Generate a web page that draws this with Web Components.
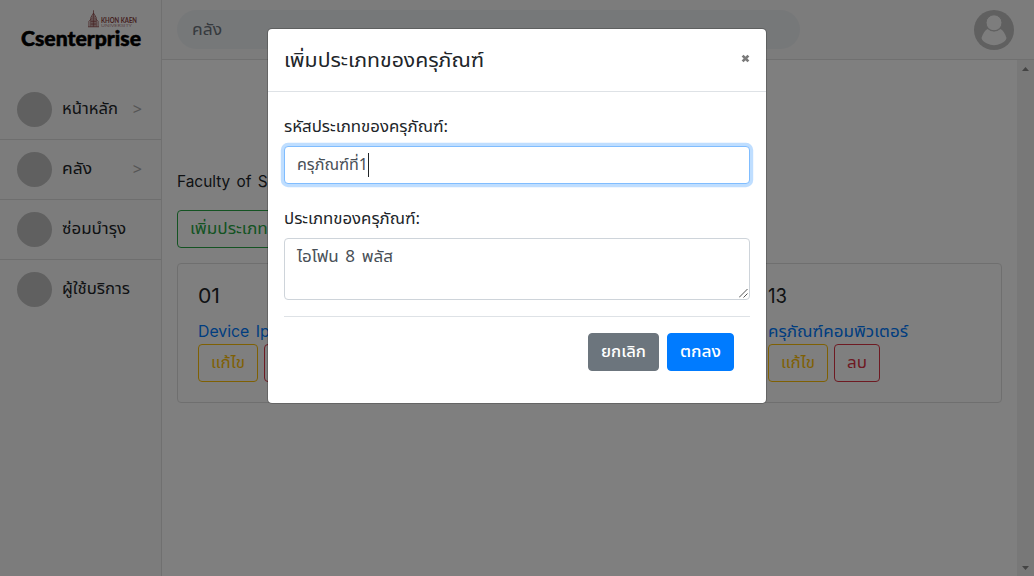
<!DOCTYPE html>
<html lang="th"><head><meta charset="utf-8"><title>Csenterprise</title>
<style>
html,body{margin:0;height:100%;overflow:hidden}
body{font:16px/24px "Noto Sans Thai","Noto Sans","Open Sans",sans-serif;color:#212529;background:#fff}
</style></head><body>
<cs-app></cs-app>
<script>
const define=(name,html,init)=>{
  const t=document.createElement('template');t.innerHTML=html;
  customElements.define(name,class extends HTMLElement{
    constructor(){super();this.attachShadow({mode:'open'}).append(t.content.cloneNode(true));}
    connectedCallback(){if(init)init(this,this.shadowRoot);}
  });
};
/* A single line of text condensed or widened to the width given in "w". */
define('fit-text',`<style>:host{display:inline-block;white-space:nowrap;vertical-align:top}:host([latin]){font-family:Inter,sans-serif;line-height:22px}span{display:inline-block;transform-origin:0 50%}</style><span><slot></slot></span>`,(h,r)=>{
  const s=r.querySelector('span'),w=+h.getAttribute('w');
  h.style.width=w+'px';
  requestAnimationFrame(()=>{const n=s.getBoundingClientRect().width;if(n)s.style.transform='scaleX('+w/n+')';});
});
define('cs-logo',`<style>
:host{display:block;height:80px;padding:10px 0 0 21px;box-sizing:border-box;color:#000}
.u{display:flex;height:17px;padding-left:67px;gap:2px;color:#8a4040}
svg{display:block;flex:none}.t{display:flex;flex-direction:column;padding-top:7px}
.a{font:700 7px/7px Lato,sans-serif}.b{font:4px/3px Lato,sans-serif;opacity:.6}
.n{font:900 20px/22px Lato,sans-serif;-webkit-text-stroke:.5px #000}
</style><div class="u"><svg width="11" height="18" viewBox="0 0 12 19" fill="none" stroke="currentColor" stroke-width=".8"><path d="M6 0v18M6 3L3 8v10M6 3l3 5v10M4.500 6v12M7.500 6v12M1 12v6M11 12v6M1 12l3-3M11 12L8 9M0 18h12M3 12h6M3 15h6"/></svg>
<div class="t"><fit-text class="a" w="36">KHON KAEN</fit-text><fit-text class="b" w="31">UNIVERSITY</fit-text></div></div>
<fit-text class="n" w="120">Csenterprise</fit-text>`);
define('cs-nav-item',`<style>
:host{display:flex;height:60px;box-sizing:border-box;border-bottom:1px solid #ddd;padding:0 19px 0 17px;align-items:center}
:host([last]){border-color:transparent}i{width:35px;height:35px;border-radius:50%;background:#c0c0c0;margin-right:10px;flex:none}
::slotted(fit-text),b{margin-bottom:2px}
b{margin-left:auto;font:16px/24px "Noto Sans",sans-serif;color:#aaa;display:none}:host([more]) b{display:block}
</style><i></i><slot></slot><b>&gt;</b>`);
define('cs-sidebar',`<style>:host{display:block;width:161px;border-right:1px solid #e0e0e0;background:#f8f8f8;flex:none}</style>
<cs-logo></cs-logo>
<cs-nav-item more><fit-text w="56">หน้าหลัก</fit-text></cs-nav-item>
<cs-nav-item more><fit-text w="30">คลัง</fit-text></cs-nav-item>
<cs-nav-item><fit-text w="64">ซ่อมบำรุง</fit-text></cs-nav-item>
<cs-nav-item last><fit-text w="68">ผู้ใช้บริการ</fit-text></cs-nav-item>`);
define('cs-header',`<style>
:host{display:flex;height:59px;background:#f8f8f8;border-bottom:1px solid #e0e0e0;padding:0 20px 0 15px;justify-content:space-between;align-items:center}
.s{width:608px;height:39px;border-radius:20px;background:#edf0f3;padding-left:15px;line-height:41px;color:#6c757d}
svg{display:block}
</style><div class="s"><fit-text w="30">คลัง</fit-text></div>
<svg width="40" height="40" viewBox="0 0 40 40"><circle cx="20" cy="20" r="20" fill="#c0c0c0"/><path d="M7.500 28C9 23 11 20.500 13.500 19Q20 24 26.500 19C29 20.500 31 23 32.500 28Q32 31 27 33.500Q20 37 13 33.500Q8 31 7.500 28Z" fill="#fafafa"/><circle cx="20" cy="12.800" r="8" fill="#fafafa" stroke="#c0c0c0"/></svg>`);
define('cs-button',`<style>
:host{display:inline-flex;box-sizing:border-box;height:38px;border:1px solid var(--c);border-radius:4px;padding:6px 12px;color:var(--c)}
:host([solid]){background:var(--c);color:#fff;font-weight:500}
</style><slot></slot>`);
define('cs-item',`<style>:host{display:block}h5{font:20px/24px "Noto Sans Thai","Noto Sans",sans-serif;height:24px;margin:0 0 11px;padding-top:1px}
.l{height:24px;color:#007bff}.b{display:flex;gap:6px}</style>
<h5><slot name="code"></slot></h5><div class="l"><slot></slot></div>
<div class="b"><cs-button style="--c:#ffc107"><fit-text w="34">แก้ไข</fit-text></cs-button><cs-button style="--c:#dc3545"><fit-text w="20">ลบ</fit-text></cs-button></div>`);
define('cs-content',`<style>
:host{display:flex;flex:1;min-height:0}main{flex:1;padding:110px 15px 0}
.f{height:24px;margin-bottom:16px;word-spacing:2px}
.c{display:grid;grid-template-columns:285px 285px 1fr;box-sizing:border-box;height:140px;border:1px solid #dfdfdf;border-radius:4px;margin-top:15px;padding:20px}
.c cs-item:last-child{grid-column:3}
.w{display:flex}
aside{width:17px;background:#f1f1f1;display:flex;flex-direction:column;justify-content:space-between;padding:7px 0 6px;box-sizing:border-box}
svg{display:block;margin-left:5px}
</style><main><div class="f"><fit-text latin w="139">Faculty of Science</fit-text></div>
<div class="w"><cs-button style="--c:#28a745"><fit-text w="162">เพิ่มประเภทของครุภัณฑ์</fit-text></cs-button></div>
<div class="c"><cs-item><fit-text latin slot="code" w="22">01</fit-text><fit-text latin w="109" style="word-spacing:2px">Device Iphone</fit-text></cs-item><cs-item><fit-text latin slot="code" w="19">13</fit-text><fit-text w="140">ครุภัณฑ์คอมพิวเตอร์</fit-text></cs-item></div></main>
<aside><svg width="7" height="4"><path d="M0 4L3.500 0L7 4Z" fill="#888"/></svg><svg width="7" height="4"><path d="M0 0H7L3.500 4Z" fill="#888"/></svg></aside>`);
define('cs-field',`<style>
:host{display:block}.l{height:24px;margin-bottom:7px;padding-top:1px}
.i{box-sizing:border-box;height:38px;border:1px solid #ced4da;border-radius:4px;padding:6px 12px;color:#495057;background:#fff;display:flex;position:relative}
:host([focus]) .i{border-color:#80bdff;box-shadow:0 0 0 3.2px rgba(0,123,255,.25)}
:host([area]) .i{height:62px;word-spacing:2px}
.k{width:1px;height:24px;background:#212529;display:none}:host([focus]) .k{display:block}
svg{position:absolute;right:1px;bottom:1px;display:none}:host([area]) svg{display:block}
</style><div class="l"><slot name="label"></slot></div><div class="i"><slot></slot><span class="k"></span><svg width="9" height="9" stroke="#555" stroke-width="1"><path d="M0 8.500L8.500 0M4.500 8.500L8.500 4.500"/></svg></div>`);
define('cs-modal',`<style>
:host{position:absolute;inset:0;background:rgba(0,0,0,.5);display:flex;justify-content:center;align-items:flex-start}
.d{margin-top:28px;width:500px;height:376px;box-sizing:border-box;border:1px solid rgba(0,0,0,.2);border-radius:5px;background:#fff;background-clip:padding-box;display:flex;flex-direction:column}
header{height:62px;border-bottom:1px solid #dee2e6;padding:0 16px;display:flex;justify-content:space-between;align-items:center;font-size:20px;line-height:32px}
header fit-text{margin-top:2px}
section{padding:22px 16px 0}
cs-field+cs-field{margin-top:22px}
footer{margin-top:16px;border-top:1px solid #dee2e6;padding:16px 16px 0;display:flex;justify-content:flex-end;gap:8px}
svg{display:block;margin-bottom:4px}
</style><div class="d"><header><fit-text w="200">เพิ่มประเภทของครุภัณฑ์</fit-text><svg width="9" height="9" viewBox="0 0 9 9"><path d="M1.600 1.600L7.400 7.400M7.400 1.600L1.600 7.400" stroke="#7b7b7b" stroke-width="2.700"/></svg></header>
<section><cs-field focus><fit-text slot="label" w="164">รหัสประเภทของครุภัณฑ์:</fit-text><fit-text w="71">ครุภัณฑ์ที่1</fit-text></cs-field>
<cs-field area><fit-text slot="label" w="136">ประเภทของครุภัณฑ์:</fit-text><fit-text w="96">ไอโฟน 8 พลัส</fit-text></cs-field>
<footer><cs-button solid style="--c:#6c757d"><fit-text w="45">ยกเลิก</fit-text></cs-button><cs-button solid style="--c:#007bff"><fit-text w="41">ตกลง</fit-text></cs-button></footer></section></div>`);
define('cs-app',`<style>:host{display:flex;height:576px;position:relative}.r{flex:1;display:flex;flex-direction:column;min-width:0}</style>
<cs-sidebar></cs-sidebar><div class="r"><cs-header></cs-header><cs-content></cs-content></div><cs-modal></cs-modal>`);
</script></body></html>
